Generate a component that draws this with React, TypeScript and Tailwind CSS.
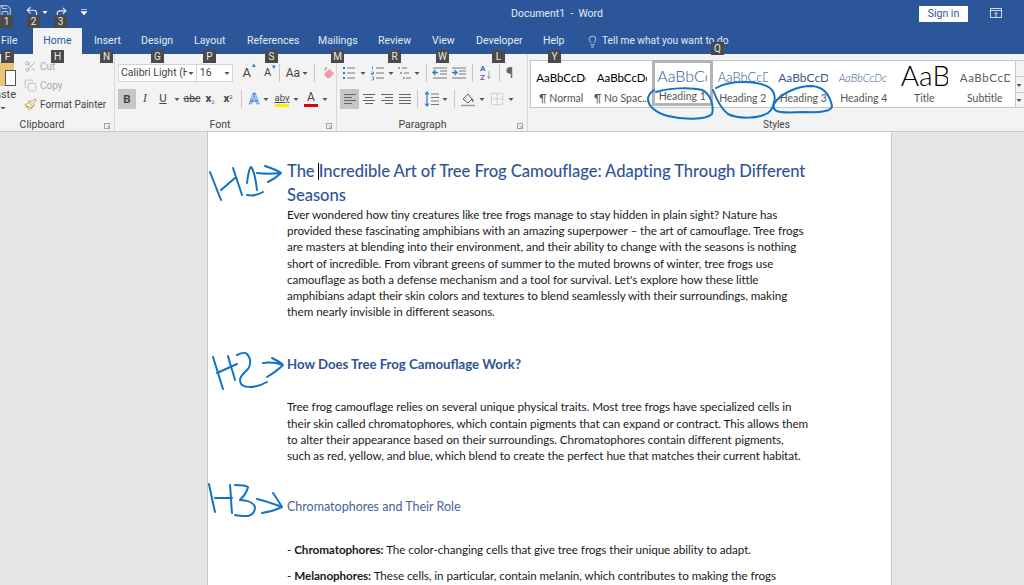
import React from "react";
import { Scissors, Copy, Paintbrush, Lightbulb, Undo2, Redo2, Save } from "lucide-react";

const ui = { fontFamily: 'Roboto, "Open Sans", sans-serif' };
const doc = { fontFamily: 'Lato, "Open Sans", sans-serif' };

function Caret({ className = "" }: { className?: string }) {
  return (
    <svg viewBox="0 0 8 8" className={"w-[8px] h-[8px] shrink-0 " + className}>
      <path d="M1.5 3h5L4 6z" fill="#555" />
    </svg>
  );
}

function Lines({ kind }: { kind: "left" | "center" | "right" | "justify" }) {
  const rows: Record<string, [number, number][]> = {
    left: [[2, 14], [2, 10], [2, 14], [2, 10]],
    center: [[2, 14], [4, 12], [2, 14], [4, 12]],
    right: [[2, 14], [6, 14], [2, 14], [6, 14]],
    justify: [[2, 14], [2, 14], [2, 14], [2, 14]],
  };
  return (
    <svg viewBox="0 0 16 14" className="w-[16px] h-[14px]">
      {rows[kind].map(([a, b], i) => (
        <path key={i} d={`M${a} ${2.5 + i * 3}H${b}`} stroke="#666" strokeWidth="1" />
      ))}
    </svg>
  );
}

function ListIcon({ kind }: { kind: "bullets" | "numbers" | "multi" }) {
  return (
    <svg viewBox="0 0 16 16" className="w-[16px] h-[16px]">
      {kind === "multi" ? (
        <>
          <path d="M5 3H10M7 8H12M9 13H14" stroke="#777" strokeWidth="1" />
          <path d="M2 2v2M4 7v2M7 12v2" stroke="#2b78c5" strokeWidth="1.2" />
        </>
      ) : (
        <>
          <path d="M6 3H14M6 8H14M6 13H14" stroke="#777" strokeWidth="1" />
          {kind === "bullets" ? (
            <path d="M2 3h2M2 8h2M2 13h2" stroke="#2b78c5" strokeWidth="2" />
          ) : (
            <path d="M2.5 1.5v3M1.5 7h2v1.5h-2v1h2M1.5 12h2v3h-2" stroke="#2b78c5" strokeWidth="0.8" fill="none" />
          )}
        </>
      )}
    </svg>
  );
}

function Indent({ dir }: { dir: "dec" | "inc" }) {
  return (
    <svg viewBox="0 0 16 14" className="w-[16px] h-[14px]">
      <path d="M1 2H15M8 5H15M8 8H15M1 12H15" stroke="#777" strokeWidth="1" />
      <path d={dir === "dec" ? "M1 6.5H6M3.5 4L1 6.5L3.5 9" : "M1 6.5H6M3.5 4L6 6.5L3.5 9"} stroke="#2b78c5" strokeWidth="1.3" fill="none" />
    </svg>
  );
}

function Sep() {
  return <div className="w-px h-[18px] bg-[#c6c6c6] shrink-0" />;
}

function GroupLabel({ children, className = "" }: { children: React.ReactNode; className?: string }) {
  return (
    <div className={"relative mt-auto h-[14px] -mb-[1px] flex items-center justify-center text-[10.5px] leading-[14px] text-[#444] " + className}>
      {children}
      <svg viewBox="0 0 8 8" className="absolute right-[4px] top-[5px] w-[6px] h-[6px]">
        <path d="M0.5 0.5H7.5V7.5H0.5Z M3.5 3.5L7 7" stroke="#777" strokeWidth="1" fill="none" />
      </svg>
    </div>
  );
}

function Tip({ label, x, y }: { label: string; x: number; y: number }) {
  return (
    <div
      className="absolute w-[13px] h-[13px] bg-[#4a4a4a] text-[#e8e8e8] text-[10px] leading-[13px] text-center z-20"
      style={{ left: x, top: y }}
    >
      {label}
    </div>
  );
}

const tabs: [string, string][] = [
  ["Insert", "w-[47px]"],
  ["Design", "w-[53px]"],
  ["Layout", "w-[53px]"],
  ["References", "w-[71px]"],
  ["Mailings", "w-[60px]"],
  ["Review", "w-[54px]"],
  ["View", "w-[44px]"],
  ["Developer", "w-[67px]"],
  ["Help", "w-[44px]"],
];

const tips: [string, number, number][] = [
  ["1", 0, 15], ["2", 27, 15], ["3", 54, 15],
  ["F", 1, 50], ["H", 51, 50], ["N", 100, 50], ["G", 151, 50], ["P", 203, 50], ["S", 265, 50],
  ["M", 331, 50], ["R", 388, 50], ["W", 436, 50], ["L", 492, 50], ["Y", 548, 50], ["Q", 711, 42],
];

function StyleItem({ children, label, selected = false }: { children: React.ReactNode; label: string; selected?: boolean }) {
  return (
    <div className={"flex flex-col items-center overflow-hidden h-full " + (selected ? "border-[3px] border-[#b4b4b4] -my-px h-[48px]" : "")}>
      <div className={"w-full h-[29px] flex items-center justify-center overflow-hidden whitespace-nowrap " + (selected ? "-mt-[2px] pt-[5px]" : "pt-[5px]")}>{children}</div>
      <div className={"text-[10.5px] leading-[14px] text-[#555] whitespace-nowrap " + (selected ? "mt-[3px]" : "mt-[1px]")}>{label}</div>
    </div>
  );
}

function Ink() {
  const paths = [
    "M656 92C668 88 690 87 702 90C711 94 714 106 712 114C706 120 684 120 668 116C656 113 648 106 648 99C648 95 650 93 654 90",
    "M716 88C730 80 758 80 770 88C777 94 776 106 768 113C758 119 738 119 728 114C720 108 716 98 713 90",
    "M774 104C780 94 796 86 812 86C824 87 830 96 832 106C832 111 820 113 806 112C792 112 780 114 775 110C773 108 773 106 774 102",
    "M210 172L221 200M221 190L235 178M233 168L242 195",
    "M247 183C248 175 249 168 251 167C254 170 256 182 257 190M247 195C252 196 258 195 263 192",
    "M257 173C265 174 272 174 280 173M265 166C271 168 277 170 281 173C277 177 272 180 268 182",
    "M213 357L223 389M217 373L237 364M228 356C230 364 233 372 235 380",
    "M237 355C241 353 245 352 247 354C251 358 251 365 248 369C244 373 240 376 240 380C240 385 244 387 250 387C256 387 262 385 267 382",
    "M263 363C270 362 277 363 283 365M272 358C276 360 280 362 283 365C278 370 272 374 267 377",
    "M209 484C211 494 213 503 215 512M215 498C220 498 226 498 232 498M230 485C231 494 231 504 232 513",
    "M235 485C240 485 245 485 248 487C247 492 243 497 240 500C246 500 253 502 255 507C255 512 252 515 248 516C243 516 239 516 235 515",
    "M257 499C265 501 274 504 282 507M273 493C276 497 279 502 282 507C276 510 269 512 262 513",
  ];
  return (
    <svg viewBox="0 0 1024 585" className="absolute left-0 top-0 w-[1024px] h-[585px] z-10 pointer-events-none">
      {paths.map((d, i) => (
        <path key={i} d={d} fill="none" stroke="#1272c4" strokeWidth="2" strokeLinecap="round" strokeLinejoin="round" />
      ))}
    </svg>
  );
}

export default function App() {
  return (
    <div className="relative w-[1024px] h-[585px] overflow-hidden flex flex-col bg-[#e6e6e6]" style={ui}>
      {/* title bar */}
      <div className="h-[28px] shrink-0 bg-[#2b579a] flex items-center text-white relative">
        <div className="flex items-center w-[505px] text-[#e9eef6]">
          <Save size={14} strokeWidth={1.5} className="-ml-[2px] -mt-[6px]" />
          <Undo2 size={14} strokeWidth={2} className="ml-[13px] -mt-[4px]" />
          <Caret className="ml-[2px] -mt-[4px] [&>path]:fill-white" />
          <Redo2 size={13} strokeWidth={2} className="ml-[6px] -mt-[4px]" />
          <svg viewBox="0 0 8 8" className="w-[8px] h-[8px] ml-[12px] -mt-[4px]">
            <path d="M1 1.5H7M1 3.5h6L4 7z" stroke="white" strokeWidth="0.6" fill="white" />
          </svg>
        </div>
        <div className="text-[10.5px] ml-[6px] w-[100px] whitespace-nowrap text-[#e4eaf4]">Document1&nbsp; -&nbsp; Word</div>
        <div className="ml-auto mr-[56px] w-[49px] h-[16px] bg-white text-[#2b579a] text-[10.5px] leading-[16px] text-center -mt-[1px]">Sign in</div>
        <svg viewBox="0 0 12 10" className="absolute left-[990px] top-[8px] w-[12px] h-[10px]">
          <path d="M0.5 0.5H11.5V9.5H0.5ZM0.5 2.5H11.5M6 9V4.5M4.5 6L6 4.5L7.5 6" fill="none" stroke="white" strokeWidth="0.8" />
        </svg>
      </div>

      {/* tabs */}
      <div className="h-[26px] shrink-0 bg-[#2b579a] flex items-stretch text-[10.5px] text-[#e4eaf4]">
        <div className="w-[33px] flex items-center pl-[1px]">File</div>
        <div className="w-[49px] bg-[#f3f3f3] text-[#2b579a] flex items-center justify-center">Home</div>
        <div className="flex items-center pl-[12px]">
          {tabs.map(([t, w]) => (
            <div key={t} className={w + " whitespace-nowrap"}>{t}</div>
          ))}
          <Lightbulb size={13} strokeWidth={1.4} className="-ml-[1px]" />
          <div className="ml-[3px] whitespace-nowrap text-[10.2px]">Tell me what you want to do</div>
        </div>
      </div>

      {/* ribbon */}
      <div className="h-[78px] shrink-0 bg-[#f3f3f3] border-b border-[#c6c6c6] flex text-[#444]">
        {/* clipboard */}
        <div className="w-[115px] shrink-0 border-r border-[#d8d8d8] flex flex-col">
          <div className="flex pt-[3px]">
            <div className="w-[17px] h-[52px] overflow-hidden relative shrink-0">
              <div className="absolute left-0 top-[5px] w-[14px] h-[24px] bg-[#eac27a]" />
              <div className="absolute left-[5px] top-[13px] w-[11px] h-[16px] bg-white border border-[#555]" />
              <div className="absolute right-[1px] top-[31px] text-[11px] leading-[14px] whitespace-nowrap">Paste</div>
              <Caret className="absolute left-[-1px] top-[47px]" />
            </div>
            <div className="ml-[7px] flex flex-col text-[10px]">
              <div className="h-[19px] flex items-center text-[#aaa]">
                <Scissors size={13} strokeWidth={1.5} color="#aaa" />
                <span className="ml-[3px]">Cut</span>
              </div>
              <div className="h-[19px] flex items-center text-[#aaa]">
                <Copy size={13} strokeWidth={1.5} color="#b5b5b5" />
                <span className="ml-[3px]">Copy</span>
              </div>
              <div className="h-[19px] flex items-center">
                <Paintbrush size={13} strokeWidth={1.8} color="#c9963f" />
                <span className="ml-[3px] whitespace-nowrap">Format Painter</span>
              </div>
            </div>
          </div>
          <GroupLabel className="pr-[30px]">Clipboard</GroupLabel>
        </div>

        {/* font */}
        <div className="w-[222px] shrink-0 border-r border-[#d8d8d8] flex flex-col pl-[3px]">
          <div className="flex items-center h-[18px] mt-[10px]">
            <div className="w-[79px] h-[18px] bg-white border border-[#d4d4d4] flex items-center pl-[2px] text-[10.5px] overflow-hidden">
              <span className="w-[66px] overflow-hidden whitespace-nowrap">Calibri Light (H</span>
              <Caret />
            </div>
            <div className="w-[36px] h-[18px] bg-white border border-[#d4d4d4] border-l-0 flex items-center pl-[3px] text-[10.5px]">
              <span className="w-[23px]">16</span>
              <Caret />
            </div>
            <div className="w-[22px] ml-[3px] text-[13px] text-center relative">A<span className="absolute right-[1px] -top-[3px] text-[6px] text-[#2b78c5]">▲</span></div>
            <div className="w-[20px] text-[11px] text-center relative">A<span className="absolute right-[1px] -top-[3px] text-[6px] text-[#2b78c5]">▼</span></div>
            <div className="ml-[1px]"><Sep /></div>
            <div className="ml-[6px] text-[12px] leading-none">Aa</div>
            <Caret className="ml-[1px]" />
            <div className="ml-[5px]"><Sep /></div>
            <svg viewBox="0 0 16 16" className="w-[15px] h-[15px] ml-[6px]">
              <path d="M7 13L3 9L9 3L14 8L9 13Z" fill="#ef9aa6" />
              <path d="M4 5L6 1" stroke="#777" strokeWidth="1" />
            </svg>
          </div>
          <div className="flex items-center h-[20px] mt-[7px] text-[11.5px]">
            <div className="w-[18px] h-[20px] bg-[#c6c6c6] font-bold text-center leading-[20px]">B</div>
            <div className="w-[18px] text-center italic" style={{ fontFamily: '"Liberation Serif", serif' }}>I</div>
            <div className="w-[18px] text-center underline">U</div>
            <Caret className="ml-[1px]" />
            <div className="w-[18px] ml-[2px] text-center text-[10.5px] line-through whitespace-nowrap">abc</div>
            <div className="w-[18px] text-center font-bold">x<sub className="text-[6px] text-[#2b78c5] font-normal">2</sub></div>
            <div className="w-[18px] text-center font-bold">x<sup className="text-[6px] font-normal">2</sup></div>
            <div className="ml-[4px]"><Sep /></div>
            <div className="w-[16px] ml-[4px] text-center text-[15px] font-bold leading-none text-[#cfe3f7]" style={{ WebkitTextStroke: "0.6px #2b78c5" }}>A</div>
            <Caret />
            <div className="w-[16px] ml-[4px] flex flex-col items-center text-[9.5px] leading-[12px] underline">
              aby
              <div className="w-[14px] h-[3px] bg-[#ffee00]" />
            </div>
            <Caret className="ml-[2px]" />
            <div className="w-[16px] ml-[3px] flex flex-col items-center text-[12px] leading-[13px]">
              A
              <div className="w-[14px] h-[3px] bg-[#e00000]" />
            </div>
            <Caret className="ml-[2px]" />
          </div>
          <GroupLabel className="pr-[14px]">Font</GroupLabel>
        </div>

        {/* paragraph */}
        <div className="w-[191px] shrink-0 border-r border-[#d8d8d8] flex flex-col pl-[3px]">
          <div className="flex items-center h-[18px] mt-[10px]">
            <div className="ml-[1px]"><ListIcon kind="bullets" /></div>
            <Caret className="ml-[2px]" />
            <div className="ml-[3px]"><ListIcon kind="numbers" /></div>
            <Caret className="ml-[1px]" />
            <div className="ml-[2px]"><ListIcon kind="multi" /></div>
            <Caret />
            <div className="ml-[5px]"><Sep /></div>
            <div className="ml-[5px]"><Indent dir="dec" /></div>
            <div className="ml-[3px]"><Indent dir="inc" /></div>
            <div className="ml-[5px]"><Sep /></div>
            <div className="ml-[7px] w-[15px] flex items-center text-[8px] leading-[9px] font-bold text-[#2b78c5]">
              <span className="flex flex-col"><span>A</span><span className="text-[#8a4bb0]">Z</span></span>
              <span className="text-[13px] font-normal text-[#666]">↓</span>
            </div>
            <div className="ml-[4px]"><Sep /></div>
            <div className="ml-[6px] text-[15px] leading-none text-[#666]">¶</div>
          </div>
          <div className="flex items-center h-[20px] mt-[7px]">
            <div className="w-[19px] h-[20px] bg-[#c6c6c6] flex items-center justify-center"><Lines kind="left" /></div>
            <div className="w-[18px] flex justify-center ml-[1px]"><Lines kind="center" /></div>
            <div className="w-[18px] flex justify-center"><Lines kind="right" /></div>
            <div className="w-[18px] flex justify-center"><Lines kind="justify" /></div>
            <div className="ml-[3px]"><Sep /></div>
            <svg viewBox="0 0 16 16" className="w-[16px] h-[16px] ml-[6px]">
              <path d="M7 3H15M7 6.5H15M7 10H15M7 13.5H15" stroke="#777" />
              <path d="M3 1V15M1 3.5L3 1L5 3.5M1 12.5L3 15L5 12.5" stroke="#2b78c5" strokeWidth="1.2" fill="none" />
            </svg>
            <Caret className="ml-[1px]" />
            <div className="ml-[5px]"><Sep /></div>
            <svg viewBox="0 0 16 16" className="w-[16px] h-[16px] ml-[5px]">
              <path d="M3 8L8 3L12 8L8 12Z" fill="none" stroke="#666" />
              <path d="M12 7c2 2 2 4 1 4s-2-2-1-4z" fill="#2b78c5" />
              <path d="M1 14.5H15" stroke="#999" strokeWidth="1.4" />
            </svg>
            <Caret className="ml-[2px]" />
            <svg viewBox="0 0 16 16" className="w-[14px] h-[14px] ml-[4px]">
              <path d="M1.5 1.5H14.5V14.5H1.5ZM8 1.5V14.5M1.5 8H14.5" fill="none" stroke="#aaa" strokeDasharray="1 1" />
            </svg>
            <Caret className="ml-[3px]" />
          </div>
          <GroupLabel className="pr-[22px]">Paragraph</GroupLabel>
        </div>

        {/* styles */}
        <div className="flex-1 flex flex-col pl-[2px]">
          <div className="flex h-[48px] mt-[6px]">
            <div className="w-[486px] h-[48px] bg-white border border-[#c6c6c6] grid grid-cols-8" style={doc}>
              <StyleItem label="¶ Normal"><span className="w-[50px] overflow-hidden text-[11.5px] text-black">AaBbCcDc</span></StyleItem>
              <StyleItem label="¶ No Spac..."><span className="w-[50px] overflow-hidden text-[11.5px] text-black">AaBbCcDc</span></StyleItem>
              <StyleItem label="Heading 1" selected><span className="w-[50px] overflow-hidden text-[16px] font-light text-[#2f5496]">AaBbCc</span></StyleItem>
              <StyleItem label="Heading 2"><span className="w-[50px] overflow-hidden text-[13px] font-light text-[#2f5496]">AaBbCcD</span></StyleItem>
              <StyleItem label="Heading 3"><span className="w-[50px] overflow-hidden text-[12px] text-[#3a5a90]">AaBbCcD</span></StyleItem>
              <StyleItem label="Heading 4"><span className="w-[50px] overflow-hidden text-[11px] italic font-light text-[#2f5496]">AaBbCcDc</span></StyleItem>
              <StyleItem label="Title"><span className="text-[28px] font-light text-black leading-[29px] w-[47px] -mt-[6px] overflow-hidden">AaB</span></StyleItem>
              <StyleItem label="Subtitle"><span className="w-[50px] overflow-hidden text-[11.5px] tracking-[0.6px] text-[#5a5a5a]">AaBbCcD</span></StyleItem>
            </div>
            <div className="w-[8px] flex flex-col border-y border-[#c6c6c6] bg-[#f3f3f3]">
              <div className="h-[16px] border-b border-[#c6c6c6]" />
              <div className="h-[16px] border-b border-[#c6c6c6]"><Caret className="-ml-[1px] mt-[4px]" /></div>
              <div className="h-[14px]"><Caret className="-ml-[1px] mt-[3px]" /></div>
            </div>
          </div>
          <div className="mt-auto -mb-[1px] h-[14px] text-[10px] leading-[14px] ml-[233px]">Styles</div>
        </div>
      </div>

      {/* document */}
      <div className="flex-1 min-h-0 overflow-hidden">
        <div className="ml-[207px] w-[685px] h-[460px] bg-white border-x border-[#c6c6c6] pl-[79px] pt-[27px] text-black whitespace-nowrap" style={doc}>
          <h1 className="text-[16.6px] leading-[24px] font-medium tracking-[-0.06px] text-[#2f5496]">
            The <span className="inline-block w-px h-[17px] bg-black align-[-3px] -mx-[0.5px]" />Incredible Art of Tree Frog Camouflage: Adapting Through Different
            <br />
            Seasons
          </h1>
          <p className="text-[11.7px] tracking-[-0.07px] leading-[16.2px] -mt-[1px] text-[#1a1a1a]">
            Ever wondered how tiny creatures like tree frogs manage to stay hidden in plain sight? Nature has<br />
            provided these fascinating amphibians with an amazing superpower – the art of camouflage. Tree frogs<br />
            are masters at blending into their environment, and their ability to change with the seasons is nothing<br />
            short of incredible. From vibrant greens of summer to the muted browns of winter, tree frogs use<br />
            camouflage as both a defense mechanism and a tool for survival. Let's explore how these little<br />
            amphibians adapt their skin colors and textures to blend seamlessly with their surroundings, making<br />
            them nearly invisible in different seasons.
          </p>
          <h2 className="text-[13.2px] leading-[18px] font-bold text-[#2f5496] mt-[36px]">How Does Tree Frog Camouflage Work?</h2>
          <p className="text-[11.7px] tracking-[-0.07px] leading-[16.33px] mt-[25px] text-[#1a1a1a]">
            Tree frog camouflage relies on several unique physical traits. Most tree frogs have specialized cells in<br />
            their skin called chromatophores, which contain pigments that can expand or contract. This allows them<br />
            to alter their appearance based on their surroundings. Chromatophores contain different pigments,<br />
            such as red, yellow, and blue, which blend to create the perfect hue that matches their current habitat.
          </p>
          <h3 className="text-[12.5px] leading-[18px] font-normal text-[#44649a] mt-[34px]">Chromatophores and Their Role</h3>
          <p className="text-[11.7px] tracking-[-0.07px] leading-[16px] mt-[25px] text-[#1a1a1a]">
            - <b>Chromatophores:</b> The color-changing cells that give tree frogs their unique ability to adapt.
          </p>
          <p className="text-[11.7px] tracking-[-0.07px] leading-[16px] mt-[10px] text-[#1a1a1a]">
            - <b>Melanophores:</b> These cells, in particular, contain melanin, which contributes to making the frogs
          </p>
        </div>
      </div>

      {tips.map(([l, x, y]) => (
        <Tip key={l} label={l} x={x} y={y} />
      ))}
      <Ink />
    </div>
  );
}
